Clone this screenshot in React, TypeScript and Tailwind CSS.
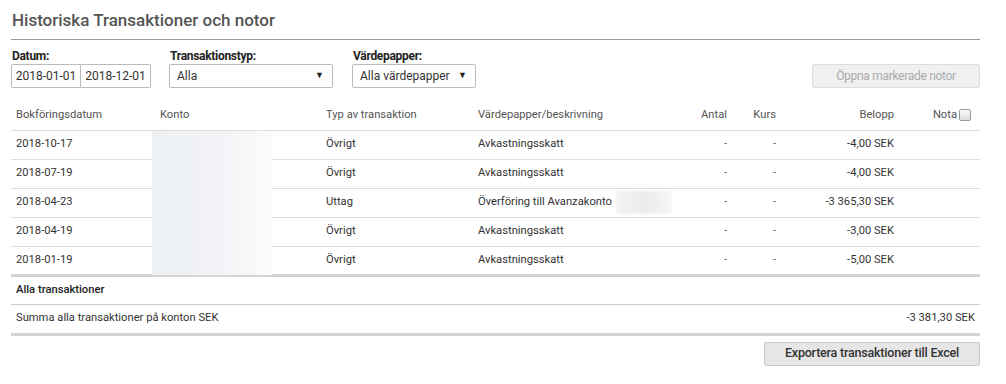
import React from "react";

const rows = [
  { date: "2018-10-17", typ: "Övrigt", desc: "Avkastningsskatt", belopp: "-4,00 SEK" },
  { date: "2018-07-19", typ: "Övrigt", desc: "Avkastningsskatt", belopp: "-4,00 SEK" },
  { date: "2018-04-23", typ: "Uttag", desc: "Överföring till Avanzakonto", belopp: "-3 365,30 SEK", hidden: true },
  { date: "2018-04-19", typ: "Övrigt", desc: "Avkastningsskatt", belopp: "-3,00 SEK" },
  { date: "2018-01-19", typ: "Övrigt", desc: "Avkastningsskatt", belopp: "-5,00 SEK" },
];

function Select({ value, width }: { value: string; width: string }) {
  return (
    <div
      className={`${width} h-[24px] border border-[#bbb] rounded-[2px] bg-white flex items-center justify-between pl-[7px] pr-[8px] text-[12px] text-[#333]`}
    >
      <span>{value}</span>
      <span className="text-[9px] text-[#222]">▼</span>
    </div>
  );
}

export default function App() {
  return (
    <div className="w-[1006px] h-[384px] bg-white px-[11px] pt-[9px] text-[#333]" style={{ fontFamily: "Roboto, 'Noto Sans', sans-serif" }}>
      <h1 className="text-[17px] font-medium text-[#555] leading-[22px] pl-[1px]">Historiska Transaktioner och notor</h1>
      <div className="mt-[8px] h-px bg-[#999] w-[969px]" />

      <div className="flex items-end mt-[9px] w-[969px]">
        <div className="flex flex-col">
          <label className="text-[12px] font-bold tracking-[-0.3px] leading-[14px] mb-[1px] pl-[1px] text-[#222]">Datum:</label>
          <div className="flex">
            <div className="w-[70px] h-[24px] border border-[#bbb] rounded-l-[2px] flex items-center justify-center text-[12px]">2018-01-01</div>
            <div className="w-[70px] h-[24px] border border-l-0 border-[#bbb] rounded-r-[2px] flex items-center justify-center text-[12px]">2018-12-01</div>
          </div>
        </div>
        <div className="flex flex-col ml-[18px]">
          <label className="text-[12px] font-bold tracking-[-0.3px] leading-[14px] mb-[1px] pl-[1px] text-[#222]">Transaktionstyp:</label>
          <Select value="Alla" width="w-[164px]" />
        </div>
        <div className="flex flex-col ml-[19px]">
          <label className="text-[12px] font-bold tracking-[-0.3px] leading-[14px] mb-[1px] pl-[1px] text-[#222]">Värdepapper:</label>
          <Select value="Alla värdepapper" width="w-[124px]" />
        </div>
        <button className="ml-auto w-[168px] h-[24px] bg-[#f0f0f0] border border-[#ddd] rounded-[2px] text-[12px] font-normal text-[#aaa] tracking-[-0.3px]">
          Öppna markerade notor
        </button>
      </div>

      <div className="relative mt-[11px] w-[969px]">
        <table className="w-full table-fixed border-collapse text-[11.2px]">
          <colgroup>
            <col className="w-[144px]" />
            <col className="w-[166px]" />
            <col className="w-[152px]" />
            <col className="w-[207px]" />
            <col className="w-[52px]" />
            <col className="w-[49px]" />
            <col className="w-[118px]" />
            <col className="w-[81px]" />
          </colgroup>
          <thead>
            <tr className="h-[31px] border-b border-[#ddd] text-[#555]">
              <th className="text-left font-normal pl-[5px] pt-[2px]">Bokföringsdatum</th>
              <th className="text-left font-normal pl-[5px] pt-[2px]">Konto</th>
              <th className="text-left font-normal pl-[5px] pt-[2px]">Typ av transaktion</th>
              <th className="text-left font-normal pl-[5px] pt-[2px]">Värdepapper/beskrivning</th>
              <th className="text-right font-normal pr-[5px] pt-[2px]">Antal</th>
              <th className="text-right font-normal pr-[5px] pt-[2px]">Kurs</th>
              <th className="text-right font-normal pr-[5px] pt-[2px]">Belopp</th>
              <th className="text-right font-normal pr-[9px] pt-[2px]">
                <span className="inline-flex items-center gap-[2px]">
                  Nota
                  <span className="inline-block w-[12px] h-[12px] border border-[#999] rounded-[2px] bg-gradient-to-b from-[#fafafa] to-[#ddd]" />
                </span>
              </th>
            </tr>
          </thead>
          <tbody>
            {rows.map((r, i) => (
              <tr key={i} className={`h-[29px] ${i === rows.length - 1 ? "border-b-[3px] border-[#d4d4d4]" : "border-b border-[#ddd]"}`}>
                <td className="pl-[5px]">{r.date}</td>
                <td className="pl-[5px]"></td>
                <td className="pl-[5px]">{r.typ}</td>
                <td className="pl-[5px]">
                  <span className="inline-flex items-center">
                    {r.desc}
                    {r.hidden && <span className="ml-[4px] inline-block w-[56px] h-[23px] bg-gradient-to-r from-[#f2f2f2] via-[#ececec] to-[#f6f6f6] blur-[1px]" />}
                  </span>
                </td>
                <td className="text-right pr-[5px] text-[#666]">-</td>
                <td className="text-right pr-[5px] text-[#666]">-</td>
                <td className="text-right pr-[5px]">{r.belopp}</td>
                <td></td>
              </tr>
            ))}
            <tr className="h-[29px] border-b border-[#ccc]">
              <td colSpan={8} className="pl-[5px] font-medium text-[#222]">Alla transaktioner</td>
            </tr>
            <tr className="h-[30px] border-b-[3px] border-[#d4d4d4]">
              <td colSpan={7} className="pl-[5px]">Summa alla transaktioner på konton SEK</td>
              <td className="text-right pr-[5px]">-3 381,30 SEK</td>
            </tr>
          </tbody>
        </table>
        <div className="absolute left-[141px] top-[32px] w-[120px] h-[144px] bg-gradient-to-r from-[#eef1f4] via-[#f0f2f5] to-[#fbfbfc]" />
      </div>

      <div className="flex justify-end w-[969px] mt-[6px]">
        <button className="w-[216px] h-[24px] bg-[#e6e6e6] border border-[#c8c8c8] rounded-[2px] text-[12.5px] font-medium text-[#333] tracking-[-0.2px]">
          Exportera transaktioner till Excel
        </button>
      </div>
    </div>
  );
}
